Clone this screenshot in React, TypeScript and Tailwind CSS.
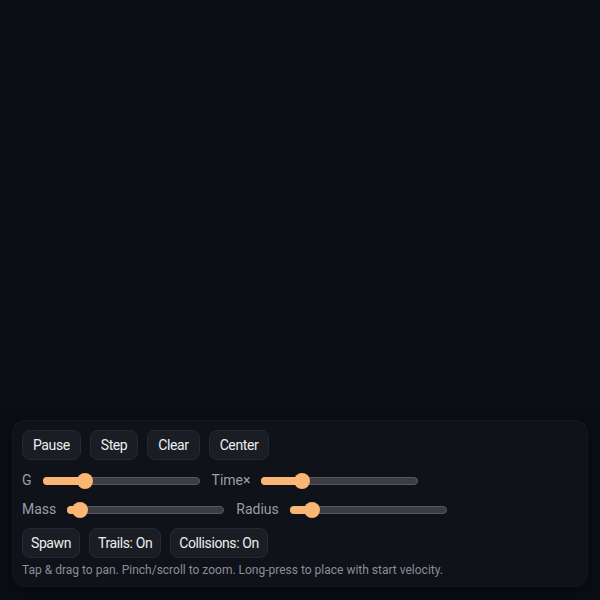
import { useState } from "react";

function Btn({ children, tight = false }: { children: React.ReactNode; tight?: boolean }) {
  return (
    <button
      className={
        "h-[30px] rounded-lg border border-[#252932] bg-[#1a1d24] text-[14px] leading-5 tracking-[-0.4px] text-[#eceef1] " +
        (tight ? "px-2" : "px-2.5")
      }
    >
      {children}
    </button>
  );
}

function Slider({ label, pct, width = 157 }: { label: string; pct: number; width?: number }) {
  return (
    <label className="flex items-center gap-[11px] text-[14px] text-[#9a9ea6]">
      <span>{label}</span>
      <div className="relative h-5 flex items-center" style={{ width }}>
        <div className="absolute inset-x-0 h-2 rounded-full bg-[#3b3d43] border border-[#55585e]" />
        <div className="absolute left-0 h-2 rounded-full bg-[#fbb674]" style={{ width: `${pct}%` }} />
        <div
          className="absolute w-4 h-4 -ml-2 rounded-full bg-[#fbb674]"
          style={{ left: `${pct}%` }}
        />
      </div>
    </label>
  );
}

export default function App() {
  const [trails] = useState(true);
  const [collisions] = useState(true);

  return (
    <div
      className="relative w-full h-[600px] bg-[#0b0e15] overflow-hidden"
      style={{ fontFamily: "Roboto, 'Liberation Sans', sans-serif" }}
    >
      {/* Controls overlay */}
      <div className="absolute left-3 right-3 bottom-[13px] rounded-xl bg-[#0f1219] border border-[#14171e] shadow-[0_4px_16px_rgba(0,0,0,0.5)] px-[9px] pt-[9px] pb-2 flex flex-col gap-2">
        <div className="flex gap-[9px] mb-0.5">
          <Btn>Pause</Btn>
          <Btn>Step</Btn>
          <Btn>Clear</Btn>
          <Btn>Center</Btn>
        </div>
        <div className="flex items-center gap-3">
          <Slider label="G" pct={27} />
          <Slider label="Time×" pct={26} />
        </div>
        <div className="flex items-center gap-3">
          <Slider label="Mass" pct={8} />
          <Slider label="Radius" pct={14} />
        </div>
        <div className="flex gap-[9px]">
          <Btn tight>Spawn</Btn>
          <Btn tight>Trails: {trails ? "On" : "Off"}</Btn>
          <Btn tight>Collisions: {collisions ? "On" : "Off"}</Btn>
        </div>
        <p className="-mt-1 text-[12px] leading-4 text-[#8a8e96]">
          Tap &amp; drag to pan. Pinch/scroll to zoom. Long-press to place with start velocity.
        </p>
      </div>
    </div>
  );
}
